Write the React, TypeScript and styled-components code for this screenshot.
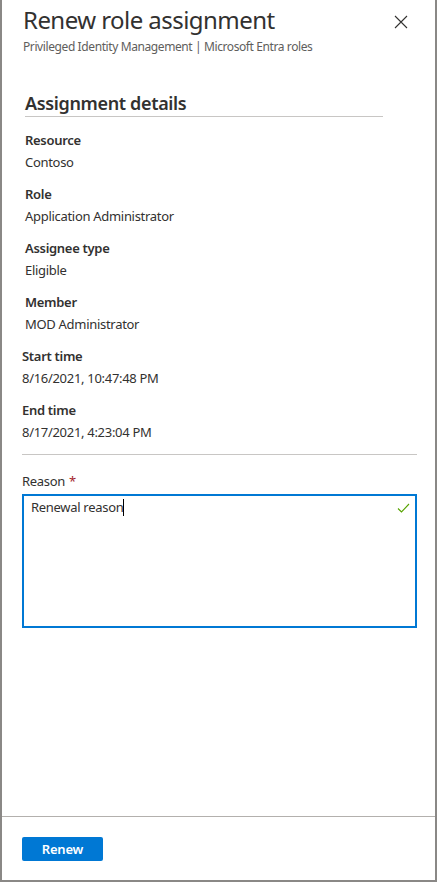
import React from "react";
import styled, { createGlobalStyle } from "styled-components";

const Global = createGlobalStyle`
  html, body { margin: 0; padding: 0; background: #ffffff; }
  body { font-family: "Segoe UI", "Noto Sans", "Open Sans", sans-serif; color: #323130; }
  * { box-sizing: border-box; }
`;

const Panel = styled.div`
  width: 437px;
  height: 882px;
  display: flex;
  flex-direction: column;
  border-left: 2px solid #8a8886;
  border-right: 2px solid #8a8886;
  border-bottom: 2px solid #8a8886;
  background: #ffffff;
`;

const Header = styled.header`
  display: flex;
  align-items: flex-start;
  justify-content: space-between;
  padding: 4px 26px 0 21px;
`;

const TitleBlock = styled.div`
  display: flex;
  flex-direction: column;
`;

const Title = styled.h1`
  margin: 0;
  font-size: 24px;
  line-height: 32px;
  font-weight: 400;
  letter-spacing: -0.55px;
  color: #323130;
`;

const Subtitle = styled.div`
  margin-top: 3px;
  font-size: 12px;
  line-height: 16px;
  letter-spacing: -0.4px;
  color: #605e5c;
`;

const CloseButton = styled.button`
  border: none;
  background: transparent;
  padding: 0;
  margin-top: 10px;
  width: 16px;
  height: 16px;
  display: flex;
  align-items: center;
  justify-content: center;
  cursor: pointer;
`;

const Body = styled.main`
  flex: 1;
  display: flex;
  flex-direction: column;
  padding: 0 18px 0 20px;
`;

const SectionTitle = styled.h2`
  margin: 36px 34px 0 3px;
  padding-bottom: 1px;
  font-size: 18px;
  line-height: 24px;
  font-weight: 600;
  letter-spacing: -0.35px;
  color: #323130;
  border-bottom: 1px solid #c8c6c4;
`;

const DetailList = styled.dl`
  margin: 13px 0 0 0;
  display: flex;
  flex-direction: column;
`;

const Detail = styled.div<{ $inset: number }>`
  padding-left: ${(p) => p.$inset}px;
  height: 54px;
`;

const DetailLabel = styled.dt`
  font-size: 13px;
  line-height: 20px;
  font-weight: 600;
  letter-spacing: -0.3px;
  color: #323130;
`;

const DetailValue = styled.dd`
  margin: 2px 0 0 0;
  font-size: 13px;
  line-height: 20px;
  letter-spacing: -0.3px;
  color: #323130;
`;

const Divider = styled.hr`
  margin: 0;
  border: none;
  border-top: 1px solid #c8c6c4;
`;

const FieldLabel = styled.label`
  display: block;
  margin-top: 16px;
  font-size: 13px;
  line-height: 20px;
  letter-spacing: -0.3px;
  color: #323130;
`;

const Required = styled.span`
  color: #a4262c;
  margin-left: 4px;
`;

const TextBox = styled.div`
  position: relative;
  margin-top: 3px;
  height: 134px;
  border: 2px solid #0078d4;
  padding: 1px 30px 0 7px;
  font-size: 13px;
  line-height: 20px;
  letter-spacing: -0.3px;
  color: #323130;
`;

const Caret = styled.span`
  display: inline-block;
  width: 1px;
  height: 17px;
  background: #000000;
  vertical-align: -4px;
`;

const ValidIcon = styled.span`
  position: absolute;
  top: 7px;
  right: 5px;
  display: flex;
`;

const Footer = styled.footer`
  border-top: 1px solid #b3b0ad;
  padding: 20px 20px 19px 20px;
  height: 64px;
`;

const PrimaryButton = styled.button`
  width: 81px;
  height: 24px;
  border: none;
  border-radius: 2px;
  background: #0078d4;
  color: #ffffff;
  font-family: inherit;
  font-size: 13px;
  font-weight: 600;
  line-height: 24px;
  letter-spacing: -0.2px;
  padding: 0;
  cursor: pointer;
`;

const details = [
  { label: "Resource", value: "Contoso", inset: 3 },
  { label: "Role", value: "Application Administrator", inset: 3 },
  { label: "Assignee type", value: "Eligible", inset: 3 },
  { label: "Member", value: "MOD Administrator", inset: 3 },
  { label: "Start time", value: "8/16/2021, 10:47:48 PM", inset: 0 },
  { label: "End time", value: "8/17/2021, 4:23:04 PM", inset: 0 },
];

export default function App() {
  return (
    <>
      <Global />
      <Panel>
        <Header>
          <TitleBlock>
            <Title>Renew role assignment</Title>
            <Subtitle>Privileged Identity Management | Microsoft Entra roles</Subtitle>
          </TitleBlock>
          <CloseButton aria-label="Close">
            <svg width="14" height="14" viewBox="0 0 14 14">
              <path d="M1 1 L13 13 M13 1 L1 13" stroke="#323130" strokeWidth="1.1" fill="none" />
            </svg>
          </CloseButton>
        </Header>
        <Body>
          <SectionTitle>Assignment details</SectionTitle>
          <DetailList>
            {details.map((d) => (
              <Detail key={d.label} $inset={d.inset}>
                <DetailLabel>{d.label}</DetailLabel>
                <DetailValue>{d.value}</DetailValue>
              </Detail>
            ))}
          </DetailList>
          <Divider />
          <FieldLabel>
            Reason<Required>*</Required>
          </FieldLabel>
          <TextBox>
            Renewal reason<Caret />
            <ValidIcon>
              <svg width="13" height="10" viewBox="0 0 13 10">
                <path d="M1 5.5 L4.5 9 L12 1" stroke="#57a300" strokeWidth="1.1" fill="none" />
              </svg>
            </ValidIcon>
          </TextBox>
        </Body>
        <Footer>
          <PrimaryButton>Renew</PrimaryButton>
        </Footer>
      </Panel>
    </>
  );
}
